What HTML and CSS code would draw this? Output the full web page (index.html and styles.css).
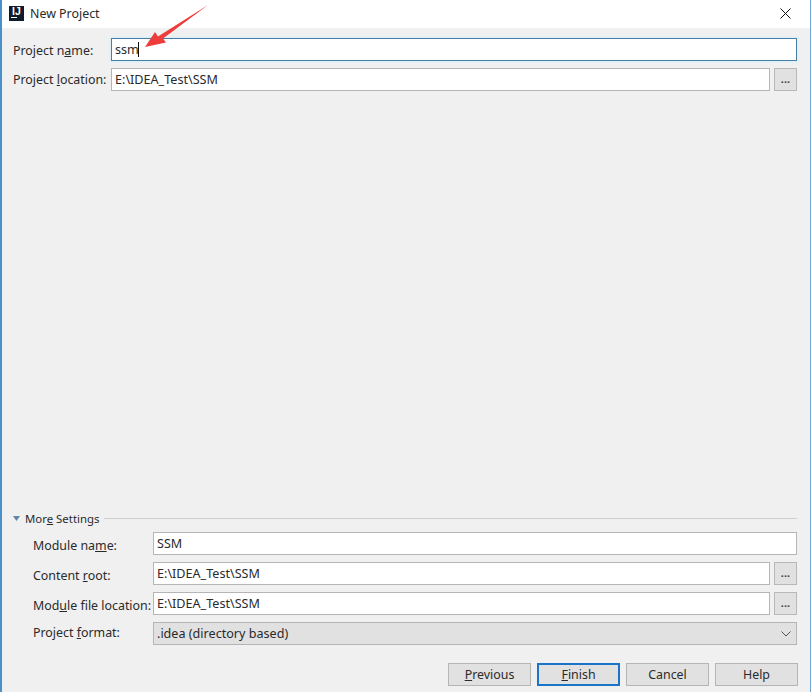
FILE: index.html
```html
<!DOCTYPE html>
<html lang="en">
<head>
<meta charset="utf-8">
<title>New Project</title>
<link rel="stylesheet" href="styles.css">
</head>
<body>
<div class="window">
  <header class="titlebar">
    <div class="logo"><span class="logo-text">IJ</span><i class="logo-bar"></i></div>
    <span class="title">New Project</span>
    <svg class="close" width="11" height="11" viewBox="0 0 11 11"><path d="M.5.5l10 10M10.5.5l-10 10" stroke="#111" stroke-width="1" fill="none"/></svg>
  </header>
  <main class="content">
    <section class="top">
      <div class="row">
        <label class="label top-label low">Project n<u>a</u>me:</label>
        <div class="field focused"><span>ssm</span><i class="caret"></i></div>
      </div>
      <div class="row">
        <label class="label top-label">Project <u>l</u>ocation:</label>
        <div class="field"><span>E:\IDEA_Test\SSM</span></div>
        <button class="browse">...</button>
      </div>
    </section>
    <section class="more">
      <div class="more-head">
        <svg class="tri" width="7" height="5" viewBox="0 0 7 5"><path d="M0 0h7L3.500 5z" fill="#5f87a8"/></svg>
        <span class="more-title">Mor<u>e</u> Settings</span>
        <span class="rule"></span>
      </div>
      <div class="row sub">
        <label class="label sub-label lower">Module na<u>m</u>e:</label>
        <div class="field"><span>SSM</span></div>
      </div>
      <div class="row sub">
        <label class="label sub-label lower">Content <u>r</u>oot:</label>
        <div class="field"><span>E:\IDEA_Test\SSM</span></div>
        <button class="browse">...</button>
      </div>
      <div class="row sub">
        <label class="label sub-label lower">Mod<u>u</u>le file location:</label>
        <div class="field"><span>E:\IDEA_Test\SSM</span></div>
        <button class="browse">...</button>
      </div>
      <div class="row sub">
        <label class="label sub-label raised">Project <u>f</u>ormat:</label>
        <div class="field select"><span>.idea (directory based)</span>
          <svg width="10" height="6" viewBox="0 0 10 6"><path d="M.5.5L5 5 9.500.5" fill="none" stroke="#555" stroke-width="1"/></svg>
        </div>
      </div>
    </section>
    <footer class="actions">
      <button class="btn"><u>P</u>revious</button>
      <button class="btn primary"><u>F</u>inish</button>
      <button class="btn">Cancel</button>
      <button class="btn">Help</button>
    </footer>
  </main>
  <svg class="arrow" width="70" height="48" viewBox="0 0 70 48"><path d="M0 43L10 28 13 32.500 63 1 18 34.500 21 38.500z" fill="#ee3b3b"/></svg>
</div>
</body>
</html>
```
FILE: styles.css
```css
* { box-sizing: border-box; }
html, body { margin: 0; height: 100%; }
body { font-family: "Noto Sans", "Open Sans", sans-serif; font-size: 12.4px; color: #2a2a2a; background: #fff; }
.window { position: relative; width: 811px; height: 692px; display: flex; flex-direction: column; border-left: 2px solid #4a90c8; border-right: 1px solid #6fa8d4; background: #f0f0f0; }
.titlebar { height: 28px; flex: none; display: flex; align-items: center; padding: 0 19px 0 7px; background: #fff; }
.logo { flex: none; width: 15px; height: 15px; margin-top: -1px; background: #0d1b2a; overflow: hidden; }
.logo-text { display: block; padding-left: 3px; font-family: "Liberation Sans", sans-serif; font-size: 10.5px; font-weight: 700; line-height: 10px; color: #fff; }
.logo-bar { display: block; width: 6px; height: 1px; margin: 1px 0 0 2px; background: #fff; }
.title { margin-left: 6px; margin-top: -1px; flex: 1; }
.close { flex: none; margin-top: -2px; }
.content { flex: 1; display: flex; flex-direction: column; padding: 10px 13px 6px 11px; }
.top { display: flex; flex-direction: column; gap: 7px; flex: 1; }
.row { display: flex; align-items: center; height: 23px; }
.label { flex: none; white-space: nowrap; }
.top-label { width: 98px; }
.sub-label { width: 140px; padding-left: 20px; }
.low { margin-top: 2px; }
.lower { margin-top: 4px; }
.raised { margin-top: -2px; }
.field { flex: 1; height: 23px; min-width: 0; display: flex; align-items: center; padding: 0 3px; font-size: 12.6px; background: #fff; border: 1px solid #b5b5b5; }
.focused { border-color: #4a7fa5; box-shadow: 0 0 2px 1px #d6effc; }
.caret { width: 1px; height: 15px; margin-left: -1px; background: #111; }
.browse { flex: none; width: 23px; height: 23px; margin-left: 4px; padding: 0 0 3px; font: inherit; font-weight: 700; font-size: 11px; color: #444; background: #e1e1e1; border: 1px solid #b8b8b8; }
.more { display: flex; flex-direction: column; gap: 7px; flex: none; }
.more-head { display: flex; align-items: center; height: 12px; margin-bottom: 1px; }
.tri { flex: none; }
.more-title { margin-left: 5px; white-space: nowrap; font-size: 11.4px; }
.rule { flex: 1; height: 1px; margin-left: 5px; background: #d0d0d0; }
.select { background: #e1e1e1; justify-content: space-between; padding-right: 5px; }
.actions { display: flex; justify-content: flex-end; gap: 6px; margin-top: 18px; margin-right: -1px; }
.btn { width: 83px; height: 23px; padding: 0; font: inherit; color: #2a2a2a; background: #e1e1e1; border: 1px solid #b5b5b5; }
.primary { border: 2px solid #1b74c5; }
.arrow { position: absolute; left: 143px; top: 4px; }
```
